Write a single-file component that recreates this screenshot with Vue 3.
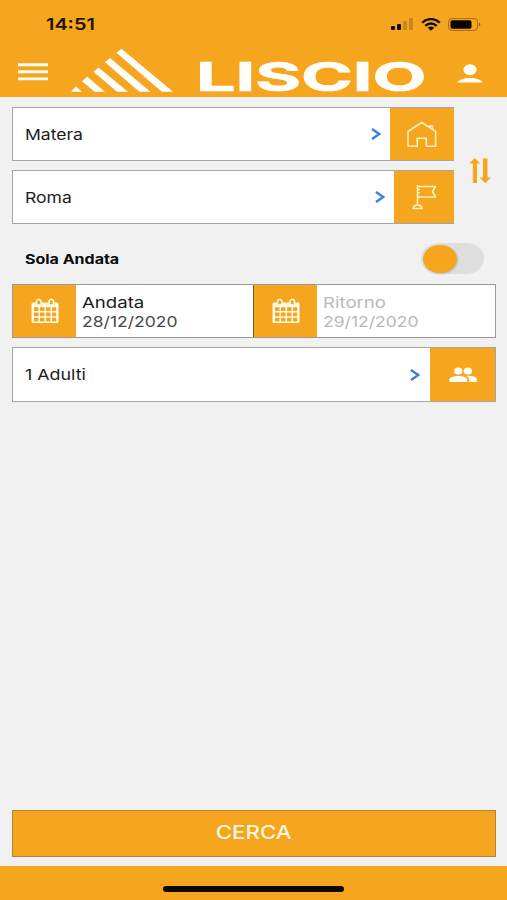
<script setup>
import { ref } from 'vue'

const oneWay = ref(false)
const bars = [
  { h: 4, on: true },
  { h: 6, on: true },
  { h: 9, on: false },
  { h: 12, on: false },
]
const places = [
  { name: 'Matera', icon: 'home' },
  { name: 'Roma', icon: 'flag' },
]
const dates = [
  { label: 'Andata', value: '28/12/2020', muted: false },
  { label: 'Ritorno', value: '29/12/2020', muted: true },
]
</script>

<template>
  <div class="screen">
    <header class="header">
      <div class="status">
        <span class="time">14:51</span>
        <div class="indicators">
          <div class="signal">
            <i v-for="(b, i) in bars" :key="i" :class="{ off: !b.on }" :style="{ height: b.h + 'px' }"></i>
          </div>
          <svg class="wifi" width="20" height="13" viewBox="0 0 20 13">
            <g fill="none" stroke="#160d00" stroke-width="2.3">
              <path d="M1.2 4.8C6-.2 14-.2 18.800 4.800" />
              <path d="M4.300 7.900C7.500 4.700 12.500 4.700 15.700 7.900" />
            </g>
            <path d="M6.700 9.700Q10 7.100 13.300 9.700L10 12.700Z" fill="#160d00" />
          </svg>
          <svg class="battery" width="33" height="13" viewBox="0 0 33 13">
            <rect x=".6" y=".6" width="29" height="11.800" rx="3.500" fill="none" stroke="#a56f17" stroke-width="1" />
            <rect x="2.500" y="2.300" width="21" height="8.400" rx="1.800" fill="#080500" />
            <path d="M31 4.500Q33.500 6.500 31 8.500Z" fill="#925f0b" />
          </svg>
        </div>
      </div>
      <nav class="nav">
        <svg class="menu" width="30" height="18" viewBox="0 0 30 18" fill="#fffdf5">
          <path d="M0 .2H30V3.200H0ZM0 7.200H30V10.200H0ZM0 14.400H30V17.200H0Z" />
        </svg>
        <svg class="brand" width="102" height="46" viewBox="0 0 102 46">
          <g fill="#fffefa">
            <path d="M0 43.800L4.800 38.500L11 43.800Z" />
            <path d="M11 33.200L16.300 28.800L34 43.800H23.500Z" />
            <path d="M22.500 23.800L27.500 19.500L57 43.800H46Z" />
            <path d="M34 14.300L39 10L79.500 43.800H68.300Z" />
            <path d="M45.500 4.800L50.500 .7L102 43.800H90.800Z" />
          </g>
        </svg>
        <div class="wordmark"><span>LISCIO</span></div>
        <svg class="user" width="28" height="20" viewBox="0 0 28 20" fill="#fffdf5">
          <ellipse cx="14" cy="5.700" rx="6.600" ry="5.500" />
          <path d="M1 18.600C5 12.300 23 12.300 27 18.600Z" />
        </svg>
      </nav>
    </header>

    <main class="content">
      <section class="route">
        <div class="places">
          <div v-for="p in places" :key="p.name" class="field">
            <span class="txt value" :class="p.icon">{{ p.name }}</span>
            <svg class="chevron" width="10" height="12" viewBox="0 0 10 12"><path d="M1 1L8.300 6L1 11" /></svg>
            <div class="tile" :class="p.icon">
              <svg v-if="p.icon === 'home'" width="30" height="27" viewBox="0 0 30 27" class="line">
                <path d="M1 10.300L14.800 1.500L28.600 10.300V25.300H19.300V17.200H10.300V25.300H1V10.300M22.500 6.300V5H25.500V8.300" />
              </svg>
              <svg v-else width="25" height="26" viewBox="0 0 25 26" class="line">
                <path d="M5.500 1V21.500M5.500 2.500H23.500L20.500 7.500L23.500 13H5.500M5.500 5.500H8M5.500 8.700H8M1 24.500Q1.500 21 5.500 21T10 24.500Z" />
              </svg>
            </div>
          </div>
        </div>
        <svg class="swap" width="22" height="26" viewBox="0 0 22 26">
          <path d="M5.800 0L11.200 5.500H8V25H3.800V5.500H.2ZM14 .5H18.500V19.500H22L16.300 25.300L10.500 19.500H14Z" fill="#f5a51e" />
        </svg>
      </section>

      <section class="oneway">
        <span class="txt caption">Sola Andata</span>
        <button class="switch" :class="{ active: oneWay }" aria-label="Sola Andata" @click="oneWay = !oneWay"><i></i></button>
      </section>

      <section class="dates">
        <div v-for="d in dates" :key="d.label" class="date" :class="{ muted: d.muted }">
          <div class="tile">
            <svg width="28" height="26" viewBox="0 0 28 26">
              <rect x=".5" y="4.500" width="27" height="20.500" rx="1.500" fill="#fffbe8" />
              <path d="M5.500 7V3Q7.700-.5 10 3V7ZM18 7V3Q20.300-.5 22.500 3V7Z" fill="#f5a51e" stroke="#fffbe8" stroke-width="1.500" />
              <path v-for="y in [9.300, 14.500, 19.700]" :key="y" :d="`M3 ${y}h4.500v3.800h-4.500zM9 ${y}h4.500v3.800h-4.500zM15 ${y}h4.500v3.800h-4.500zM21 ${y}h4.200v3.800h-4.200z`" fill="#f5a51e" />
            </svg>
          </div>
          <div class="date-text">
            <span class="txt date-label">{{ d.label }}</span>
            <span class="txt date-value">{{ d.value }}</span>
          </div>
        </div>
      </section>

      <section class="field passengers">
        <span class="txt value">1 Adulti</span>
        <svg class="chevron" width="10" height="12" viewBox="0 0 10 12"><path d="M1 1L8.300 6L1 11" /></svg>
        <div class="tile people">
          <svg width="28" height="16" viewBox="0 0 28 16" fill="#fffdf5">
            <ellipse cx="9.300" cy="4" rx="4.200" ry="3.500" />
            <ellipse cx="18.900" cy="4" rx="4.200" ry="3.500" />
            <path d="M.3 14.900V12.500C.3 7.700 18.300 7.700 18.300 12.500V14.900Z" />
            <path d="M17.500 8.900C23 8.300 27.900 9.900 27.900 12.600V14.900H20.300V12.500Q20.300 10.200 17.500 8.900Z" />
          </svg>
        </div>
      </section>

      <button class="search"><span class="txt">CERCA</span></button>
    </main>

    <footer class="footer"><div class="indicator"></div></footer>
  </div>
</template>

<style>
body {
  background: #f1f1f1;
}
</style>

<style scoped>
.screen {
  width: 507px;
  height: 900px;
  display: flex;
  flex-direction: column;
  overflow: hidden;
  background: #f1f1f1;
  font-family: Inter, sans-serif;
  color: #1c1c1c;
}
.screen * {
  box-sizing: border-box;
}
svg {
  display: block;
  flex: none;
}
.txt {
  display: inline-block;
  white-space: nowrap;
  transform: scaleX(1.17);
  transform-origin: left center;
}
.header {
  height: 97px;
  background: #f5a51e;
  flex: none;
}
.status {
  height: 48px;
  padding: 0 26px 0 46px;
  display: flex;
  align-items: center;
  justify-content: space-between;
}
.time {
  font-size: 16px;
  font-weight: 600;
  color: #211300;
  transform: scaleX(1.24);
  transform-origin: left center;
}
.indicators {
  display: flex;
  align-items: center;
}
.signal {
  height: 12px;
  display: flex;
  align-items: flex-end;
  gap: 2px;
  margin: 0 8px 0 0;
}
.signal i {
  width: 4px;
  border-radius: 1px;
  background: #160d00;
}
.signal i.off {
  background: #c98619;
}
.wifi {
  margin-right: 7px;
}
.nav {
  height: 49px;
  display: flex;
  align-items: flex-start;
  padding-left: 18px;
}
.menu {
  margin-top: 15px;
}
.brand {
  margin-left: 23px;
}
.wordmark {
  width: 231px;
  height: 49px;
  margin-left: 22.5px;
  padding-top: 4px;
  flex: none;
}
.wordmark span {
  display: inline-block;
  font-size: 40px;
  line-height: 49px;
  font-weight: 700;
  color: #fffefa;
  -webkit-text-stroke: 0.7px #fffefa;
  transform: scaleX(1.75);
  transform-origin: left center;
}
.user {
  margin: 16px 0 0 29.5px;
}
.content {
  height: 769px;
  padding: 10px 11px 9px 12px;
  display: flex;
  flex-direction: column;
}
.route {
  display: flex;
  align-items: center;
}
.places {
  width: 442px;
  display: flex;
  flex-direction: column;
  gap: 9px;
}
.swap {
  margin: 10px 0 0 14.5px;
}
.field {
  height: 54px;
  display: flex;
  align-items: center;
  background: #fff;
  border: 1px solid #a5a5a5;
  padding-left: 12px;
}
.value {
  font-size: 15px;
}
.chevron {
  margin-left: auto;
  margin-right: 10px;
  fill: none;
  stroke: #3d80dc;
  stroke-width: 2.5;
}
.places .chevron {
  margin-right: 9px;
}
.tile {
  width: 63px;
  align-self: stretch;
  flex: none;
  display: flex;
  align-items: center;
  justify-content: center;
  background: #f5a51e;
}
.field .tile {
  margin-right: -1px;
}
.places .tile {
  width: 64px;
}
.places .tile.flag {
  width: 60px;
}
.field .tile.people {
  width: 65px;
  margin-right: 0;
}
.line {
  fill: none;
  stroke: #fff2bd;
  stroke-width: 1.6;
  stroke-linejoin: round;
}
.oneway {
  height: 60px;
  display: flex;
  align-items: center;
  justify-content: space-between;
  padding: 9px 12px 0 12.5px;
}
.caption {
  font-size: 13px;
  font-weight: 700;
  color: #090909;
  transform: scaleX(1.23);
}
.switch {
  width: 63px;
  height: 31px;
  padding: 1px 2px;
  border: 0;
  border-radius: 18px / 16px;
  background: #dedede;
}
.switch i {
  display: block;
  width: 34px;
  height: 28px;
  border-radius: 50%;
  background: #f5a51e;
  box-shadow: 1px 1px 2px #bbb;
}
.switch.active i {
  margin-left: auto;
}
.dates {
  height: 54px;
  display: grid;
  grid-template-columns: 240px 1fr;
  border: 1px solid #999;
  background: #fff;
}
.date {
  display: flex;
}
.date.muted {
  border-left: 1px solid #765a29;
}
.date-text {
  padding: 2px 0 0 5.5px;
  display: flex;
  flex-direction: column;
  align-items: flex-start;
  justify-content: center;
  font-size: 15px;
  line-height: 19px;
}
.date-label {
  transform: scaleX(1.24);
}
.date-value {
  color: #484848;
}
.muted .date-label,
.muted .date-value {
  color: #b9b9b9;
}
.passengers {
  margin-top: 9px;
  height: 55px;
}
.passengers .value {
  transform: scaleX(1.19);
}
.search {
  margin-top: auto;
  height: 47px;
  padding: 0 0 2px;
  border: 1px solid #b38336;
  background: #f5a51e;
  color: #fff8dd;
  font: 500 18px Inter, sans-serif;
}
.search .txt {
  transform: scaleX(1.24);
  transform-origin: center;
}
.footer {
  height: 34px;
  background: #f5a51e;
  padding-top: 20px;
}
.indicator {
  width: 181px;
  height: 6px;
  margin: 0 auto;
  border-radius: 3px;
  background: #0c0904;
}
</style>
